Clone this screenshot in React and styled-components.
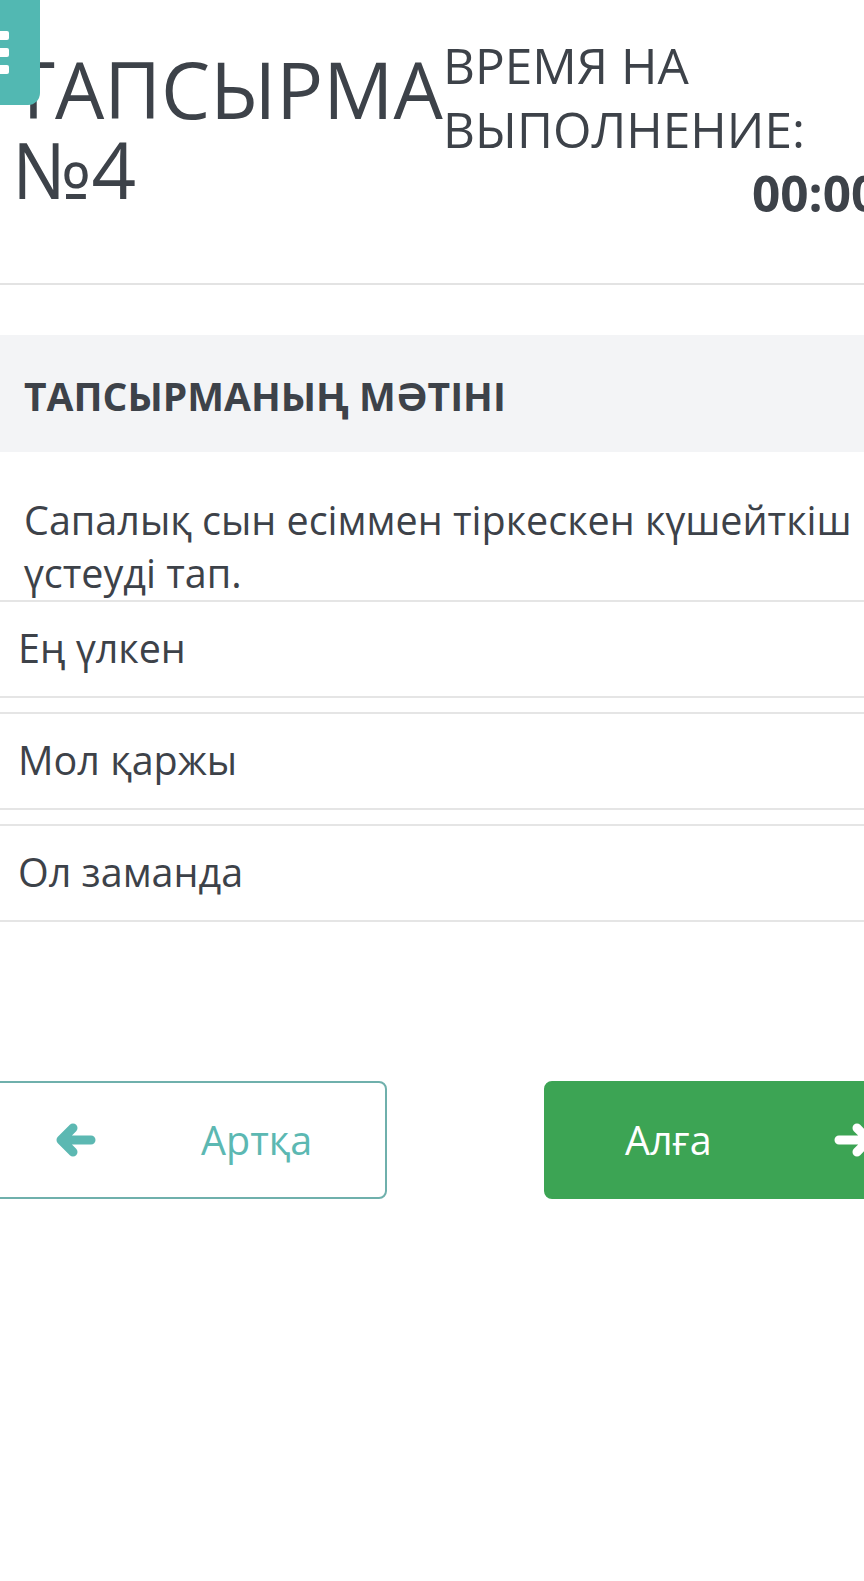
import React from "react";
import styled, { createGlobalStyle } from "styled-components";

const Global = createGlobalStyle`
  html, body { margin: 0; padding: 0; background: #fff; overflow-x: hidden; }
  body { font-family: "Open Sans", "Noto Sans", sans-serif; color: #3d4249; }
  * { box-sizing: border-box; }
`;

const Page = styled.div`
  position: relative;
  width: 864px;
  min-height: 1581px;
  overflow: hidden;
`;

const MenuButton = styled.button`
  position: absolute;
  top: -10px;
  left: -30px;
  width: 70px;
  height: 115px;
  border: none;
  border-radius: 0 0 12px 12px;
  background: #52b8b2;
  display: flex;
  flex-direction: column;
  justify-content: center;
  align-items: flex-end;
  gap: 8px;
  padding: 10px 31px 0 0;
`;

const MenuBar = styled.span`
  display: block;
  width: 30px;
  height: 9px;
  border-radius: 2px;
  background: #fff;
`;

const Header = styled.header`
  display: flex;
  align-items: center;
  padding: 33px 0 58px 12px;
  border-bottom: 2px solid #e3e3e3;
  white-space: nowrap;
`;

const Title = styled.h1`
  margin: 0;
  font-size: 78px;
  line-height: 80px;
  font-weight: 400;
  color: #3d4249;
  width: 431px;
  flex: none;
  white-space: normal;
`;

const Timer = styled.div`
  flex: none;
  width: 507px;
  font-size: 49.5px;
  line-height: 64px;
  color: #3d4249;
`;

const TimerLabel = styled.div`
  white-space: normal;
  width: 390px;
`;

const TimerValue = styled.div`
  font-weight: 700;
  text-align: right;
`;

const SectionHead = styled.div`
  margin-top: 50px;
  height: 117px;
  background: #f3f4f6;
  display: flex;
  align-items: center;
  padding: 0 24px;
`;

const SectionTitle = styled.h2`
  margin: 4px 0 0;
  font-size: 39px;
  font-weight: 700;
  color: #3d4249;
`;

const Question = styled.p`
  margin: 0;
  padding: 42px 10px 0 24px;
  font-size: 39.5px;
  line-height: 53px;
  color: #3d4249;
`;

const Options = styled.div`
  display: flex;
  flex-direction: column;
  gap: 14px;
`;

const Option = styled.div`
  border-top: 2px solid #e5e5e5;
  border-bottom: 2px solid #e5e5e5;
  padding: 20px 18px 21px;
  font-size: 39.5px;
  line-height: 53px;
  color: #3d4249;
`;

const Nav = styled.nav`
  display: flex;
  gap: 157px;
  margin: 159px 0 0 -14px;
`;

const NavButton = styled.button`
  flex: none;
  width: 401px;
  height: 118px;
  border-radius: 8px;
  display: flex;
  align-items: center;
  font-family: "Open Sans", sans-serif;
  font-size: 39.5px;
  padding: 0 0 0 ${(p) => p.$padLeft}px;
  gap: ${(p) => p.$gap}px;
  border: 2px solid ${(p) => (p.$primary ? "#3ca454" : "#6fb0ac")};
  background: ${(p) => (p.$primary ? "#3ca454" : "#fff")};
  color: ${(p) => (p.$primary ? "#fff" : "#5cb8b2")};
`;

const Arrow = ({ dir, color }) => (
  <svg width="40" height="34" viewBox="0 0 40 34" style={dir === "right" ? { transform: "scaleX(-1)" } : undefined}>
    <path
      d="M17 5 L5 17 L17 29 M6 17 H35"
      fill="none"
      stroke={color}
      strokeWidth="9"
      strokeLinecap="round"
      strokeLinejoin="round"
    />
  </svg>
);

export default function App() {
  return (
    <Page>
      <Global />
      <Header>
        <Title>ТАПСЫРМА №4</Title>
        <Timer>
          <TimerLabel>ВРЕМЯ НА ВЫПОЛНЕНИЕ:</TimerLabel>
          <TimerValue>00:00:00</TimerValue>
        </Timer>
      </Header>
      <MenuButton aria-label="menu">
        <MenuBar />
        <MenuBar />
        <MenuBar />
      </MenuButton>
      <SectionHead>
        <SectionTitle>ТАПСЫРМАНЫҢ МӘТІНІ</SectionTitle>
      </SectionHead>
      <Question>Сапалық сын есіммен тіркескен күшейткіш үстеуді тап.</Question>
      <Options>
        <Option>Ең үлкен</Option>
        <Option>Мол қаржы</Option>
        <Option>Ол заманда</Option>
      </Options>
      <Nav>
        <NavButton $padLeft={68} $gap={105}>
          <Arrow dir="left" color="#5cb8b2" />
          <span>Артқа</span>
        </NavButton>
        <NavButton $primary $padLeft={79} $gap={122}>
          <span>Алға</span>
          <Arrow dir="right" color="#fff" />
        </NavButton>
      </Nav>
    </Page>
  );
}
